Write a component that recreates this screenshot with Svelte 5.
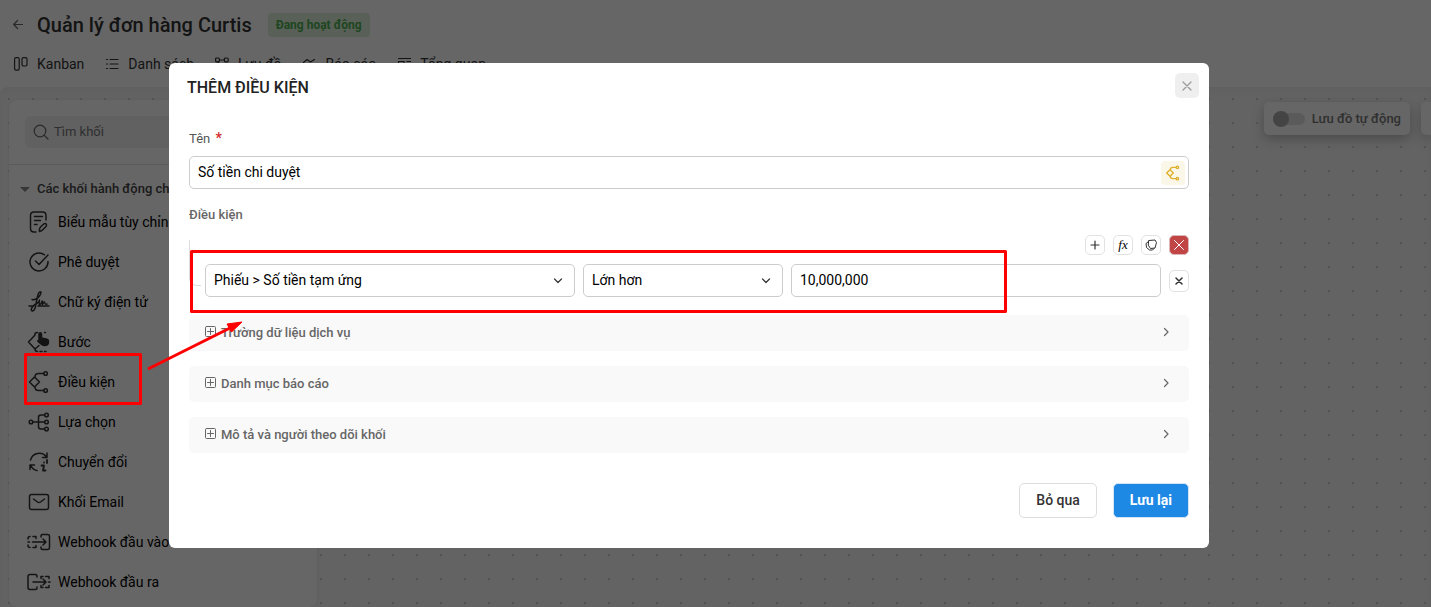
<script>
  const tabs = [
    { id: 'kanban', label: 'Kanban' },
    { id: 'list', label: 'Danh sách' },
    { id: 'flow', label: 'Lưu đồ' },
    { id: 'report', label: 'Báo cáo' },
    { id: 'overview', label: 'Tổng quan' }
  ];

  const blocks = [
    { id: 'form', label: 'Biểu mẫu tùy chỉnh' },
    { id: 'approve', label: 'Phê duyệt' },
    { id: 'sign', label: 'Chữ ký điện tử' },
    { id: 'step', label: 'Bước' },
    { id: 'condition', label: 'Điều kiện' },
    { id: 'choice', label: 'Lựa chọn' },
    { id: 'convert', label: 'Chuyển đổi' },
    { id: 'email', label: 'Khối Email' },
    { id: 'hookin', label: 'Webhook đầu vào' },
    { id: 'hookout', label: 'Webhook đầu ra' }
  ];

  const sections = ['Trường dữ liệu dịch vụ', 'Danh mục báo cáo', 'Mô tả và người theo dõi khối'];

  let name = $state('Số tiền chi duyệt');
  let amount = $state('10,000,000');
  let auto = $state(false);
</script>

{#snippet tabIcon(id)}
  <svg class="line" width="14" height="14" viewBox="0 0 14 14" aria-hidden="true">
    {#if id === 'kanban'}
      <rect x="0.6" y="0.6" width="4.6" height="12.6" rx="1.4" /><rect x="8" y="0.6" width="5" height="8.4" rx="1.4" />
    {:else if id === 'list'}
      <path d="M5 2.5H13M5 7H13M5 11.5H13M1.5 2.5h1M1.5 7h1M1.5 11.5h1" />
    {:else if id === 'flow'}
      <rect x="0.6" y="1" width="3.8" height="3.8" rx="1" /><rect x="9.4" y="1" width="3.8" height="3.8" rx="1" /><rect x="5" y="9.2" width="4" height="4" rx="1" /><path d="M4.4 3H9.4M3 5l3 4" />
    {:else if id === 'report'}
      <path d="M1.5 5.5L5 2.5L8.5 5L12.5 2.5M1 12.5h12M2.5 12V9M7 12V8M11.500 12V7" />
    {:else}
      <path d="M1.500 1.500H13.500M1.500 4.500H7V9H1.500ZM10 4.500h3.500M10 8.500h3.500M1.500 12.500h12" />
    {/if}
  </svg>
{/snippet}

{#snippet branch()}
  <path d="M1.500 12L6.500 7L11.500 12L6.500 17Z M7 7.500V7Q7 3.500 10.500 3.500H15.800M7 16.500V17Q7 20.500 10.500 20.500H15.800" />
  <circle cx="17.600" cy="3.500" r="1.800" /><circle cx="17.600" cy="20.500" r="1.800" />
{/snippet}

{#snippet blockIcon(id)}
  <svg class="line block-icon" width="24" height="24" viewBox="0 0 24 24" aria-hidden="true">
    {#if id === 'form'}
      <path d="M9 22H7Q3.500 22 3.500 18.500V5.500Q3.500 2 7 2H15.500Q19 2 19 5.500V10M7.500 6.500H15.500M7.500 10.500H13.500M7.500 14.500H10" />
      <path d="M12.500 21.500Q12 18.500 13.500 17L17 13.800Q18.500 13 19.300 14.200Q20 15.300 19 16.500L15.500 20Q14.500 21 12.500 21.500Z" />
    {:else if id === 'approve'}
      <path d="M17.500 4.800A9 9 0 1 0 21 11.500M8.500 11L12 14.500L21 5" />
    {:else if id === 'sign'}
      <path d="M5 9.500Q9 10.500 12.500 6Q15 2 13.300 1.800Q11 2.500 10 9L8.500 16.500Q7.500 21 5 21Q3.500 20 5 17.500Q7 14.500 10.500 13Q12.500 11.500 12.500 10Q11.800 14.500 12.500 15Q14 14.500 15.200 11Q16 11 15.500 14.500Q16.500 12 17.500 12Q18 15 20 14M2 16H6M11 16H22" />
    {:else if id === 'step'}
      <path d="M8 5L1.500 12L8 19L12 15.500M8 5Q7.500 2.500 10.500 2.500M8 19Q8 21.500 10.500 21.500M13 21.500h2M17.500 21.500h1.500M17.500 2.500h1" />
      <path class="solid" d="M12 4Q12 2.800 13.200 2.800T14.500 4V8L20 9.300Q21.800 10 21.500 12Q21.500 15.500 17.500 15.500Q15.500 15.500 14 14L11 11.500Q10.500 10 12 10.500Z" />
    {:else if id === 'condition'}
      <g transform="translate(1 0)">{@render branch()}</g>
    {:else if id === 'choice'}
      <circle cx="4" cy="12" r="1.800" /><circle cx="19.500" cy="5" r="1.800" /><circle cx="19.500" cy="12" r="1.800" /><circle cx="19.500" cy="19" r="1.800" />
      <path d="M6 12H17.500M17.500 5H14Q11.500 5 11.500 7.500V16.500Q11.500 19 14 19H17.500" />
    {:else if id === 'convert'}
      <path d="M3.500 10A9 9 0 0 1 19.500 7M20 3V7.500H15.500M3.500 15A9 9 0 0 0 10 20.500M3 19.500V15H7.500" />
      <path class="heavy" d="M17 12.500v.1M14.500 15.500H17L16 20.500H18.500M20 10V13" />
    {:else if id === 'email'}
      <rect x="2.500" y="4.500" width="19" height="15" rx="2" /><path d="M6.500 9L10.500 12Q12 13 13.500 12L17.500 9" />
    {:else if id === 'hookin'}
      <path d="M14 7V6Q14 4.500 15.500 4.500H20.500Q22.500 4.500 22.500 6.500V17.500Q22.500 19.500 20.500 19.500H15.500Q14 19.500 14 18V17M5.500 12H18.500M16 9L19 12L16 15M1 9V8.500Q1 6.500 3 6.500M6 6.500H9V8.500M1 15V15.500Q1 17.500 3 17.500M6 17.500H9V15.500M1 12H2.500" />
    {:else}
      <path d="M10 7V6Q10 4.500 8.500 4.500H3Q1 4.500 1 6.500V17.500Q1 19.500 3 19.500H8.500Q10 19.500 10 18V17M6 12H18.500M16 9L19 12L16 15M14 8.500V6.500H16M18.500 6.500H22V8.500M14 15.500V17.500H16M18.500 17.500H22V15.500M21.500 12H23" />
    {/if}
  </svg>
{/snippet}

{#snippet chevron()}
  <svg class="chevron line" width="12" height="12" viewBox="0 0 12 12" aria-hidden="true"><path d="M2.500 4L6 7.500L9.500 4" /></svg>
{/snippet}

<div class="app">
  <header>
    <div class="heading">
      <button class="plain back" aria-label="Quay lại">
        <svg class="line" width="12" height="12" viewBox="0 0 12 12"><path d="M9.500 5.500H0.700M4.500 1.500L0.700 5.500L4.500 9.500" /></svg>
      </button>
      <h1>Quản lý đơn hàng Curtis</h1>
      <span class="status">Đang hoạt động</span>
    </div>
    <nav>
      {#each tabs as tab}
        <a href="#{tab.id}">{@render tabIcon(tab.id)}{tab.label}</a>
      {/each}
    </nav>
  </header>

  <main>
    <aside>
      <div class="search-area">
        <label class="search">
          <svg class="line" width="16" height="16" viewBox="0 0 16 16" aria-hidden="true"><circle cx="7" cy="7" r="5.800" /><path d="M11.300 11.300L15 15" /></svg>
          <input type="search" placeholder="Tìm khối" aria-label="Tìm khối" />
        </label>
      </div>
      <h2><span class="caret"></span>Các khối hành động chính</h2>
      <ul>
        {#each blocks as block}
          <li>{@render blockIcon(block.id)}{block.label}</li>
        {/each}
      </ul>
    </aside>
    <div class="canvas-tools">
      <label class="auto">
        <input type="checkbox" role="switch" bind:checked={auto} />
        Lưu đồ tự động
      </label>
      <span class="more"></span>
    </div>
  </main>
</div>

<div class="backdrop">
  <div class="modal" role="dialog" aria-modal="true" aria-labelledby="dialog-title">
    <div class="modal-head">
      <h2 id="dialog-title">THÊM ĐIỀU KIỆN</h2>
      <button class="close" aria-label="Đóng">
        <svg class="line" width="10" height="10" viewBox="0 0 10 10"><path d="M1 1L9 9M9 1L1 9" /></svg>
      </button>
    </div>

    <div class="modal-body">
      <label class="caption" for="name">Tên <span class="required">*</span></label>
      <div class="name-box">
        <input id="name" type="text" bind:value={name} />
        <span class="badge">
          <svg class="line" width="16" height="16" viewBox="0 0 22 24" aria-hidden="true">{@render branch()}</svg>
        </span>
      </div>

      <span class="caption strong">Điều kiện</span>
      <div class="group">
        <div class="group-tools">
          <button class="mini" aria-label="Thêm">
            <svg class="line" width="10" height="10" viewBox="0 0 10 10"><path d="M5 1V9M1 5H9" /></svg>
          </button>
          <button class="mini fx" aria-label="Công thức">fx</button>
          <button class="mini" aria-label="Nhóm điều kiện">
            <svg class="line thin" width="12" height="12" viewBox="0 0 12 12"><path d="M4 1.500L10 1L11.500 3.500L10 9L5.500 9.500L3.500 6.500Z M3.500 2.500L1 4.500L1.500 8.500L4.500 11H7.500L9 9.500" /></svg>
          </button>
          <button class="mini danger" aria-label="Xóa nhóm">
            <svg class="line thin" width="12" height="12" viewBox="0 0 12 12"><path d="M1.500 1.500L10.500 10.500M10.500 1.500L1.500 10.500" /></svg>
          </button>
        </div>
        <div class="rule">
          <div class="select">
            <select aria-label="Trường"><option>Phiếu &gt; Số tiền tạm ứng</option></select>
            {@render chevron()}
          </div>
          <div class="select">
            <select aria-label="Phép so sánh"><option>Lớn hơn</option></select>
            {@render chevron()}
          </div>
          <input type="text" aria-label="Giá trị" bind:value={amount} />
          <button class="mini tall" aria-label="Xóa điều kiện">
            <svg class="line cross" width="8" height="8" viewBox="0 0 8 8"><path d="M1 1L7 7M7 1L1 7" /></svg>
          </button>
        </div>
      </div>

      <div class="sections">
        {#each sections as title}
          <button class="section">
            <svg class="line plus" width="12" height="12" viewBox="0 0 12 12" aria-hidden="true"><rect x="0.500" y="0.500" width="10" height="10" rx="1" /><path d="M5.500 2.500V8.500M2.500 5.500H8.500" /></svg>
            {title}
            <svg class="line next" width="12" height="12" viewBox="0 0 12 12" aria-hidden="true"><path d="M4.500 2.500L8 6L4.500 9.500" /></svg>
          </button>
        {/each}
      </div>

      <footer>
        <button class="action">Bỏ qua</button>
        <button class="action primary">Lưu lại</button>
      </footer>
    </div>
  </div>
</div>

<svg class="guide" width="1010" height="410" viewBox="0 0 1010 410" aria-hidden="true">
  <rect x="25.500" y="354.500" width="115" height="49" />
  <rect x="191.500" y="251.500" width="814" height="60" />
  <path d="M148 369L230 328" />
  <path class="tip" d="M242 322L227 324L231.500 332Z" />
</svg>

<style>
  :global(body) {
    overflow: hidden;
    background: #fff;
    font-family: Roboto, "Liberation Sans", sans-serif;
    font-size: 14px;
  }
  :global(*) { box-sizing: border-box; }
  button, input, select { font: inherit; color: inherit; }
  button { display: flex; align-items: center; justify-content: center; padding: 0; background: #fff; }
  h1, h2, ul { margin: 0; padding: 0; }
  svg { flex: none; }
  .line { fill: none; stroke: currentColor; stroke-width: 1.2; stroke-linecap: round; stroke-linejoin: round; }
  .thin { stroke-width: 1; }
  .heavy { stroke-width: 1.8; }
  .solid { fill: currentColor; }

  .app { display: flex; flex-direction: column; height: 100vh; color: #222; }
  header { padding: 12px 13px 0; height: 87px; flex: none; }
  .heading { display: flex; align-items: center; height: 26px; }
  .plain { border: 0; background: none; }
  .back { width: 24px; height: 24px; justify-content: flex-start; color: #666; }
  h1 { font-size: 20px; font-weight: 500; line-height: 26px; color: #333; }
  .status { margin-left: 16px; padding: 0 8px; border-radius: 4px; background: #dcefdc; color: #4caf50; font-size: 12px; font-weight: 700; line-height: 24px; }
  nav { display: flex; gap: 21px; margin: 16px 0 0 1px; }
  nav a { display: flex; align-items: center; gap: 9px; color: #333; text-decoration: none; line-height: 20px; }

  main {
    flex: 1;
    min-height: 0;
    display: flex;
    align-items: flex-start;
    justify-content: space-between;
    padding: 13px 0 0 9px;
    border-radius: 8px 0 0;
    background: radial-gradient(circle at 9px 12px, #ccc 1px, transparent 1px) 0 0 / 24px 24px, #f7f7f7;
    box-shadow: inset 0 4px 6px #efefef;
    overflow: hidden;
  }
  aside { width: 308px; min-height: 100%; background: #fff; border-radius: 8px; box-shadow: 0 0 3px #ddd; }
  .search-area { padding: 16px; border-bottom: 1px solid #e4e4e4; }
  .search { display: flex; align-items: center; gap: 5px; height: 32px; padding: 0 8px; border-radius: 6px; background: #f2f2f2; color: #666; }
  .search input { width: 100%; height: 30px; border: 0; background: none; font-size: 13px; padding: 0 0 2px; }
  .search input::placeholder { color: #777; opacity: 1; }
  aside h2 { display: flex; align-items: center; gap: 7px; padding: 0 12px; margin-top: 13px; font-size: 13px; font-weight: 500; line-height: 22px; color: #444; }
  .caret { border: 5px solid transparent; border-top-color: #888; border-bottom: 0; width: 10px; margin-left: -1px; }
  ul { list-style: none; padding: 2px 0 0 18px; }
  li { display: flex; align-items: center; gap: 7px; height: 40px; color: #000; }
  .block-icon { color: #333; stroke-width: 1.5; }
  .canvas-tools { display: flex; gap: 11px; padding-top: 2px; }
  .auto { display: flex; align-items: center; gap: 7px; height: 33px; padding: 0 9px; border-radius: 5px; background: #fff; color: #777; font-size: 13px; font-weight: 500; box-shadow: 0 4px 12px #bbb; }
  .auto input { appearance: none; width: 32px; height: 12px; margin: 0; border-radius: 6px; background: #e2e2e2; display: flex; align-items: center; }
  .auto input::before { content: ""; width: 16px; height: 16px; border-radius: 50%; background: #aaa; }
  .auto input:checked { justify-content: flex-end; }
  .more { width: 10px; height: 33px; border-radius: 5px 0 0 5px; background: #fff; box-shadow: 0 4px 12px #bbb; }

  .backdrop { position: fixed; inset: 0; padding: 63px 53px 0 0; background: rgba(0, 0, 0, 0.6); display: flex; align-items: flex-start; justify-content: center; }
  .modal { width: 100%; max-width: 1040px; border-radius: 6px; background: #fff; }
  .modal-head { display: flex; align-items: flex-start; justify-content: space-between; padding: 10px 10px 0 18px; }
  .modal-head h2 { font-size: 16px; font-weight: 500; line-height: 30px; color: #222; }
  .close { width: 24px; height: 25px; border: 0; border-radius: 5px; background: #efefef; color: #999; }
  .modal-body { padding: 25px 20px 30px; }
  .caption { display: block; font-size: 13px; line-height: 20px; font-weight: 400; color: #555; }
  .strong { font-weight: 500; color: #666; }
  .required { color: #d32f2f; font-weight: 700; font-size: 14px; margin-left: 2px; }
  .name-box { display: flex; align-items: center; height: 33px; margin: 7px 0 16px; padding-right: 3px; border: 1px solid #ccc; border-radius: 5px; color: #000; }
  .name-box input { flex: 1; height: 31px; border: 0; outline: 0; padding: 0 8px 2px; background: none; }
  .badge { display: flex; align-items: center; justify-content: center; width: 24px; height: 24px; border-radius: 4px; background: #faf6e8; color: #e0b02c; }
  .badge svg { stroke-width: 2; }
  .group { position: relative; margin-top: 10px; padding-left: 16px; }
  .group::before { content: ""; position: absolute; left: 0; top: 5px; width: 11px; height: 45px; border: solid #ddd; border-width: 0 0 1px 1px; border-radius: 0 0 0 8px; }
  .group-tools { display: flex; justify-content: flex-end; gap: 8px; }
  .mini { flex: none; width: 20px; height: 20px; border: 1px solid #e2e2e2; border-radius: 5px; color: #333; }
  .fx { font-family: "Liberation Serif", serif; font-style: italic; font-size: 13px; line-height: 16px; color: #000; }
  .danger { background: #c14545; border-color: #dcb8b8; color: #fff; }
  .tall { height: 22px; color: #333; }
  .cross { stroke-width: 1.5; }
  .rule { display: grid; grid-template-columns: 370fr 200fr 370fr 20px; align-items: center; gap: 8px; margin-top: 9px; color: #000; }
  .rule select, .rule input { width: 100%; height: 33px; padding: 0 8px 2px; border: 1px solid #ccc; border-radius: 5px; background: #fff; appearance: none; }
  .select { position: relative; }
  .chevron { position: absolute; right: 11px; top: 11px; pointer-events: none; color: #333; }
  .sections { display: grid; gap: 15px; margin-top: 18px; }
  .section { width: 100%; height: 36px; padding: 0 17px 2px 16px; gap: 4px; justify-content: flex-start; border: 0; border-radius: 5px; background: #f9f9f9; color: #666; font-size: 13px; font-weight: 500; }
  .plus { stroke-width: 1; }
  .next { margin-left: auto; }
  footer { display: flex; justify-content: flex-end; gap: 16px; margin-top: 30px; }
  .action { height: 35px; padding: 0 16px 2px; border: 1px solid #ddd; border-radius: 5px; font-weight: 500; color: #333; }
  .primary { background: #1e88e5; border-color: #d2e5f6; color: #fff; font-weight: 700; }
  .guide { position: fixed; left: 0; top: 0; pointer-events: none; fill: none; stroke: #f00; stroke-width: 3; stroke-linejoin: round; }
  .tip { fill: #f00; stroke-width: 1; }
</style>
